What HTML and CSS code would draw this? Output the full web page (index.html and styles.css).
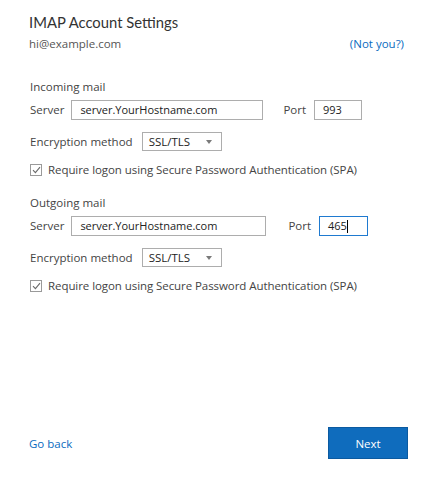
FILE: index.html
```html
<!DOCTYPE html>
<html>
<head>
<meta charset="utf-8">
<link rel="stylesheet" href="styles.css">
</head>
<body>
<div class="page">
  <header class="head">
    <h1 class="title">IMAP Account Settings</h1>
    <div class="account">
      <span class="email">hi@example.com</span>
      <a class="link notyou">(Not you?)</a>
    </div>
  </header>

  <section class="group incoming">
    <div class="group-title">Incoming mail</div>
    <div class="row server-row">
      <span class="lbl">Server</span>
      <div class="input server-input">server.YourHostname.com</div>
      <span class="lbl port-lbl">Port</span>
      <div class="input port-input">993</div>
    </div>
    <div class="row enc-row">
      <span class="lbl">Encryption method</span>
      <div class="select"><span>SSL/TLS</span><span class="caret"></span></div>
    </div>
    <label class="row check-row">
      <span class="checkbox"><svg width="9" height="8" viewBox="0 0 9 8"><path d="M1 4.2 L3.4 6.6 L8 1.2" fill="none" stroke="#6a6a6a" stroke-width="1.1"/></svg></span>
      <span class="check-text">Require logon using Secure Password Authentication (SPA)</span>
    </label>
  </section>

  <section class="group outgoing">
    <div class="group-title">Outgoing mail</div>
    <div class="row server-row">
      <span class="lbl">Server</span>
      <div class="input server-input">server.YourHostname.com</div>
      <span class="lbl port-lbl">Port</span>
      <div class="input port-input focused">465<span class="cursor"></span></div>
    </div>
    <div class="row enc-row">
      <span class="lbl">Encryption method</span>
      <div class="select"><span>SSL/TLS</span><span class="caret"></span></div>
    </div>
    <label class="row check-row">
      <span class="checkbox"><svg width="9" height="8" viewBox="0 0 9 8"><path d="M1 4.2 L3.4 6.6 L8 1.2" fill="none" stroke="#6a6a6a" stroke-width="1.1"/></svg></span>
      <span class="check-text">Require logon using Secure Password Authentication (SPA)</span>
    </label>
  </section>

  <footer class="foot">
    <a class="link goback">Go back</a>
    <button class="next">Next</button>
  </footer>
</div>
</body>
</html>
```
FILE: styles.css
```css
* { box-sizing: border-box; }
html, body { margin: 0; padding: 0; background: #fff; }
body {
  font-family: "Open Sans", "Noto Sans", sans-serif;
  color: #444;
  font-size: 11.5px;
}
.page {
  height: 486px;
  display: flex;
  flex-direction: column;
  padding: 12px 27px 0 29px;
}
.title {
  margin: 0;
  font-family: Lato, "Open Sans", sans-serif;
  font-weight: 400;
  font-size: 14.8px;
  color: #333;
  line-height: 20px;
}
.account {
  display: flex;
  justify-content: space-between;
  margin-top: 3px;
  line-height: 18px;
  font-size: 11.5px;
  color: #555;
}
.link { color: #0a6bc0; cursor: pointer; }

.group { margin-top: 25px; padding-left: 1px; }
.outgoing { margin-top: 15px; }
.group-title { line-height: 18px; color: #444; }
.row { display: flex; align-items: center; }
.server-row { margin-top: 4px; height: 20px; }
.lbl { color: #444; line-height: 18px; }
.input {
  height: 20px;
  border: 1px solid #adadad;
  padding: 0 8px;
  line-height: 18px;
  font-size: 11px;
  color: #222;
  background: #fff;
}
.server-input { margin-left: 7px; width: 192px; }
.outgoing .server-input { width: 195px; }
.port-lbl { margin-left: 20px; }
.port-input { margin-left: 8px; width: 48px; }
.outgoing .port-lbl { margin-left: 22px; }
.outgoing .port-input { margin-left: 8px; width: 49px; }
.port-input.focused { border-color: #1f7ad0; display: flex; align-items: center; }
.cursor { display: inline-block; width: 1px; height: 13px; background: #000; }

.enc-row { margin-top: 12px; height: 19px; }
.select {
  margin-left: 9px;
  width: 80px;
  height: 19px;
  border: 1px solid #adadad;
  display: flex;
  align-items: center;
  justify-content: space-between;
  padding: 0 9px 0 6px;
  color: #222;
  font-size: 11.5px;
}
.caret {
  width: 0; height: 0;
  border-left: 3.5px solid transparent;
  border-right: 3.5px solid transparent;
  border-top: 4px solid #7a7a7a;
}
.check-row { margin-top: 10px; }
.checkbox {
  width: 12px; height: 12px;
  border: 1px solid #9a9a9a;
  display: flex; align-items: center; justify-content: center;
  margin-right: 6px;
}
.check-text { line-height: 18px; color: #444; letter-spacing: -0.07px; }

.foot {
  margin-top: auto;
  margin-bottom: 27px;
  display: flex;
  justify-content: space-between;
  align-items: center;
}
.goback { font-size: 11.5px; }
.next {
  width: 80px;
  height: 32px;
  background: #0f6cbd;
  border: 1px solid #0b5aa0;
  color: #fff;
  font-family: inherit;
  font-size: 11.5px;
  margin-right: -4px;
}
```
